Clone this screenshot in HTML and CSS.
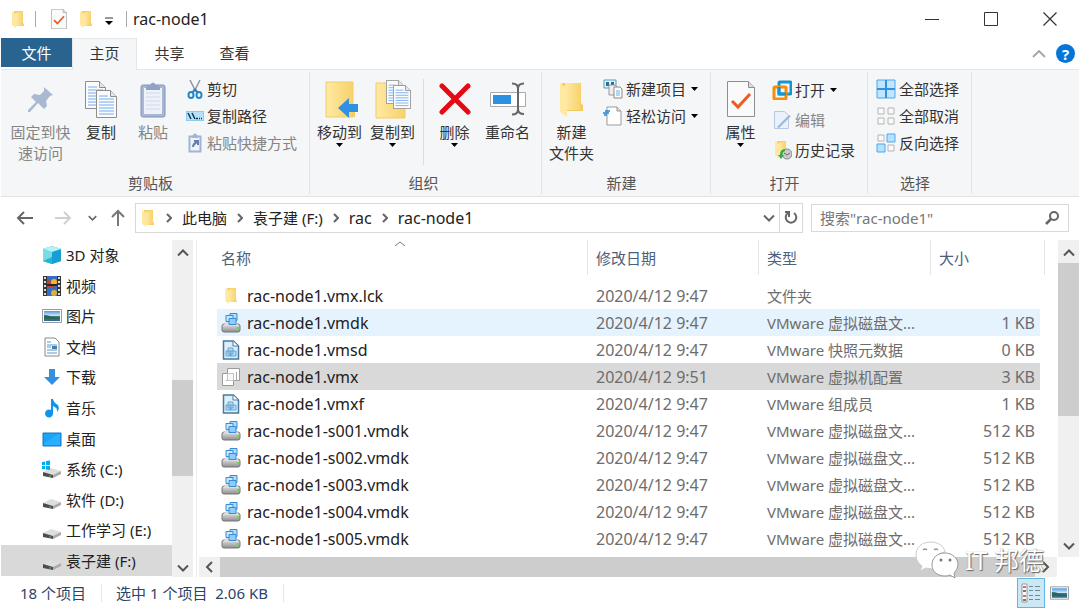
FILE: index.html
```html
<!DOCTYPE html>
<html lang="zh-CN">
<head>
<meta charset="utf-8">
<meta name="viewport" content="width=device-width, initial-scale=1">
<title>rac-node1</title>
<link rel="stylesheet" href="styles.css">
</head>
<body>
<svg class="defs" aria-hidden="true">
  <defs>
    <linearGradient id="gold" x1="0" x2="1"><stop offset="0" stop-color="#ffe9a3"/><stop offset="1" stop-color="#f8d26a"/></linearGradient>
    <linearGradient id="steel" x1="0" x2="0" y1="0" y2="1"><stop offset="0" stop-color="#e4e4e4"/><stop offset="1" stop-color="#8d8d8d"/></linearGradient>
    <linearGradient id="sky" x1="0" x2="0" y1="0" y2="1"><stop offset="0" stop-color="#4f9be0"/><stop offset=".5" stop-color="#d5ecfa"/><stop offset=".55" stop-color="#3c7a70"/><stop offset="1" stop-color="#2d6a9b"/></linearGradient>
    <symbol id="folder" viewBox="0 0 14 18"><path d="M3 1h9v12l1 1v2H3z" fill="#f5cf68"/><path d="M1 1l4 3v14l-4-3z" fill="#ffe8a0"/><path d="M5 3l7-2v14l-7 1z" fill="url(#gold)"/></symbol>
    <symbol id="folder-large" viewBox="0 0 27 36"><path d="M4 2h19v20l2 2v6H4z" fill="#f3ca5e"/><path d="M7 2h16v27H7z" fill="url(#gold)"/><path d="M2 2l7 5v29l-7-5z" fill="#ffe8a0"/></symbol>
    <symbol id="check" viewBox="0 0 28 36"><path d="M.5.5h21l6 6v29H.5z" fill="#fafafa" stroke="#8e8e8e"/><path d="M21.500.5v6h6" fill="#ddd" stroke="#8e8e8e"/><path d="M5 20l6 6 12-13" fill="none" stroke="#f1591d" stroke-width="3"/></symbol>
    <symbol id="page" viewBox="0 0 21 28"><path d="M.5.500h14l6 6v21H.5z" fill="#fbfbfb" stroke="#8e8e8e"/><path d="M14.500.5v6h6" fill="#e6e6e6" stroke="#8e8e8e"/><path d="M3 6h9M3 9h15M3 12h15M3 15h15M3 18h15M3 21h15M3 24h15" stroke="#70aaf5"/></symbol>
    <symbol id="down" viewBox="0 0 7 4"><path d="M0 0h7L3.500 4z" fill="#000"/></symbol>
    <symbol id="chev" viewBox="0 0 12 8"><path d="M1 1.500l5 5 5-5" fill="none" stroke="currentColor" stroke-width="2"/></symbol>
    <symbol id="next" viewBox="0 0 6 10"><path d="M1 1l4 4-4 4" fill="none" stroke="#666" stroke-width="2"/></symbol>
    <symbol id="vmdk" viewBox="0 0 20 20"><rect x="1" y="11" width="18" height="8" rx="2" fill="url(#steel)" stroke="#777"/><path d="M2 13l3-4h10l3 4" fill="#ddd"/><path d="M9 .5h7v7H9z" fill="#a9dcff" stroke="#3b8bd4"/><path d="M5 2.500h7v6H5z" fill="#c7e9ff" stroke="#3b8bd4"/><path d="M8 5.500h7v6H8z" fill="#8ccfff" stroke="#3b8bd4"/><rect x="16" y="14" width="2" height="2" fill="#59e837"/></symbol>
    <symbol id="vmfile" viewBox="0 0 18 20"><path d="M1.500 1h10l5 5v13h-15z" fill="#dceefa" stroke="#48799c" stroke-width="1.500"/><path d="M11 1v5h5" fill="#fff" stroke="#48799c"/><path d="M6 8h5v6H6zM4 11h5v5H4zM8 11h6v5H8z" fill="#b7dbf4" stroke="#64a5d3"/></symbol>
    <symbol id="vmx" viewBox="0 0 20 20"><path d="M6.500 1.500h12v12h-12zM1.500 6.500h11v12h-11z" fill="#fff" stroke="#9a9a9a"/><path d="M5 13.500h10.500V5" fill="none" stroke="#aaa"/><path d="M6.500 6.500h6v7h-6z" fill="#f8f8f8" stroke="#bbb" stroke-dasharray="1 1"/></symbol>
    <symbol id="drive" viewBox="0 0 20 12"><path d="M1 5L9 1l10 3-8 5z" fill="#dedede"/><path d="M1 5l10 3v3L1 9z" fill="#4a4d4a"/><path d="M11 8l8-4v3l-8 4z" fill="#aaa"/><path d="M7 8.500h2v1H7z" fill="#45c75b"/></symbol>
    <symbol id="picture" viewBox="0 0 20 14"><path d="M.5.500h19v13H.5z" fill="#fff" stroke="#9a9a9a"/><path d="M2 2h16v10H2z" fill="url(#sky)"/><path d="M2 6q5 0 8 2l8 1v1H2z" fill="#2c635c"/></symbol>
  </defs>
</svg>

<header class="titlebar">
  <svg class="i14"><use href="#folder"/></svg>
  <span class="rule"></span>
  <button class="quick" aria-label="属性"><svg class="i-check"><use href="#check"/></svg></button>
  <button class="quick" aria-label="新建文件夹"><svg class="i14"><use href="#folder"/></svg></button>
  <button class="quick more" aria-label="自定义快速访问工具栏"><svg width="8" height="8" viewBox="0 0 8 8"><path d="M0 1h8" stroke="#333"/><path d="M0 4h8L4 8z"/></svg></button>
  <span class="rule"></span>
  <h1>rac-node1</h1>
  <div class="window-buttons">
    <button aria-label="最小化"><svg width="14" height="14"><path d="M0 7.500h14" stroke="#333"/></svg></button>
    <button aria-label="最大化"><svg width="14" height="14"><path d="M.5.500h13v13H.5z" fill="none" stroke="#333"/></svg></button>
    <button aria-label="关闭"><svg width="14" height="14"><path d="M.5.500l13 13M13.500.500l-13 13" stroke="#333" stroke-width="1.200"/></svg></button>
  </div>
</header>

<nav class="tabs">
  <button class="tab file">文件</button>
  <button class="tab active">主页</button>
  <button class="tab">共享</button>
  <button class="tab">查看</button>
  <div class="tab-tools">
    <button aria-label="折叠功能区"><svg width="14" height="8"><path d="M1 7l6-6 6 6" fill="none" stroke="#a5a5a5" stroke-width="1.800"/></svg></button>
    <button class="help" aria-label="帮助">?</button>
  </div>
</nav>

<section class="ribbon">
  <div class="group">
    <div class="tools">
      <button class="big pin" disabled><span class="art"><svg width="27" height="27" viewBox="0 0 27 27"><path d="M17 1l9 8-3 1-4 5 1 5-3 3-6-6-8 9H1v-2l8-8-5-5 3-3 6 1 4-4z" fill="#a9b9d1"/></svg></span>固定到快速访问</button>
      <button class="big copy"><span class="art"><svg width="32" height="37" viewBox="0 0 32 37"><use href="#page" width="21" height="28"/><use href="#page" x="11" y="9" width="21" height="28"/></svg></span>复制</button>
      <button class="big paste" disabled><span class="art"><svg width="26" height="37" viewBox="0 0 26 37"><rect x="1" y="4" width="24" height="32" rx="2" fill="#a9b7d2" stroke="#7f94bd"/><path d="M4 7h18v26H4z" fill="#edf2f9"/><path d="M6 12h14M6 16h14M6 20h14M6 24h14M6 28h14" stroke="#cfd9ea"/><path d="M6 6l4-2q3-5 6 0l4 2v3H6z" fill="#91a2c4"/></svg></span>粘贴</button>
      <div class="stack">
        <button class="small"><svg class="i18" viewBox="0 0 18 20"><path d="M4 1l6 12M14 1L8 13" stroke="#8d969e" stroke-width="1.500"/><path d="M9 10l-3 4M9 10l3 4" stroke="#2487cc" stroke-width="2"/><ellipse cx="5" cy="16" rx="2.500" ry="3" fill="none" stroke="#2487cc" stroke-width="2"/><ellipse cx="13" cy="16" rx="2.500" ry="3" fill="none" stroke="#2487cc" stroke-width="2"/></svg>剪切</button>
        <button class="small"><svg class="i18" viewBox="0 0 18 18"><path d="M0 4h18v10H0z" fill="#8dcbf2"/><path d="M1 5h16v8H1z" fill="#b7e1fb"/><path d="M2 6l3 6M6 6l3 6M10 11.500h2M13 11.500h1M15 11.500h1" stroke="#1b3449" stroke-width="1.500"/></svg>复制路径</button>
        <button class="small" disabled><svg class="i18" viewBox="0 0 18 20"><path d="M3.500 3.500h11v15h-11z" fill="#eef3fa" stroke="#a3b3d1" stroke-width="2"/><path d="M6 3l3-3 3 3v2H6z" fill="#a3b3d1"/><path d="M7 14q0-3 4-5M8 8h4v4" fill="none" stroke="#647ead" stroke-width="2"/></svg>粘贴快捷方式</button>
      </div>
    </div>
    <h2>剪贴板</h2>
  </div>

  <div class="group organize">
    <div class="tools">
      <button class="big"><span class="art"><svg width="36" height="37" viewBox="0 0 36 37"><path d="M4 1h27v22l2 2v11H4z" fill="#f6cc5c"/><path d="M4 1h27v35H4z" fill="url(#gold)" stroke="#f1cc6b"/><path d="M16 27l11-10v6h10v8H27v6z" fill="#2e91e5"/></svg></span>移动到<svg class="caret"><use href="#down"/></svg></button>
      <button class="big"><span class="art"><svg width="36" height="39" viewBox="0 0 36 39"><path d="M1 3h26v20l3 3v12H1z" fill="url(#gold)" stroke="#f1cc6b"/><use href="#page" x="11" y="0" width="18" height="24"/><use href="#page" x="18" y="5" width="18" height="24"/></svg></span>复制到<svg class="caret"><use href="#down"/></svg></button>
      <span class="divider"></span>
      <button class="big"><span class="art"><svg width="32" height="32" viewBox="0 0 32 32"><path d="M3 3l26 26M29 3L3 29" stroke="#e50914" stroke-width="5" stroke-linecap="round"/></svg></span>删除<svg class="caret"><use href="#down"/></svg></button>
      <button class="big"><span class="art"><svg width="36" height="34" viewBox="0 0 36 34"><path d="M.5 10.500h35v14H.5z" fill="#fff" stroke="#aaa"/><path d="M3 13h18v9H3z" fill="#2b91e5"/><path d="M22 1.500q6 0 6 5v21q0 5-6 5M34 1.500q-6 0-6 5M28 27q0 5 6 5" fill="none" stroke="#666" stroke-width="2"/></svg></span>重命名</button>
    </div>
    <h2>组织</h2>
  </div>

  <div class="group">
    <div class="tools">
      <button class="big"><span class="art"><svg width="27" height="36"><use href="#folder-large"/></svg></span>新建<br>文件夹</button>
      <div class="stack">
        <button class="small"><svg class="i20" viewBox="0 0 20 20"><path d="M1 1h12v8H1z" fill="#dff4fc" stroke="#5a9bb6"/><path d="M3 3h3v4H3zM8 3h3v3H8z" fill="#286d9a"/><path d="M6 6h6l2 2v8H6z" fill="#eee" stroke="#999"/><path d="M11 8h6l2 2v9h-8z" fill="#fff" stroke="#888"/><path d="M13 12h4M13 14h4M13 16h4" stroke="#6ab0e4"/></svg>新建项目<svg class="caret"><use href="#down"/></svg></button>
        <button class="small"><svg class="i20" viewBox="0 0 20 20"><path d="M4 1h10l4 4v14H4z" fill="#fff" stroke="#999"/><path d="M14 1v4h4" fill="#ddd" stroke="#999"/><path d="M2 5h5M0 7h6M1 9h3" stroke="#2385cb" stroke-width="1.500"/></svg>轻松访问<svg class="caret"><use href="#down"/></svg></button>
      </div>
    </div>
    <h2>新建</h2>
  </div>

  <div class="group">
    <div class="tools">
      <button class="big"><span class="art"><svg width="28" height="36"><use href="#check"/></svg></span>属性<svg class="caret"><use href="#down"/></svg></button>
      <div class="stack roomy">
        <button class="small"><svg class="i20" viewBox="0 0 20 20"><rect x="7" y="2" width="12" height="12" rx="1" fill="none" stroke="#1596d1" stroke-width="3"/><rect x="2" y="7" width="12" height="12" rx="1" fill="none" stroke="#f78d0a" stroke-width="3"/><path d="M7 7v7h7" fill="none" stroke="#1596d1" stroke-width="3"/></svg>打开<svg class="caret"><use href="#down"/></svg></button>
        <button class="small" disabled><svg class="i20" viewBox="0 0 20 20"><path d="M2.500 1.500h10l4 4v13h-14z" fill="#e8f1fc" stroke="#b9c9e1"/><path d="M5 17L17 5l2 1L7 18z" fill="#9fb5d7"/></svg>编辑</button>
        <button class="small"><svg class="i20" viewBox="0 0 20 20"><use href="#folder" x="2" y="0" width="14" height="18"/><circle cx="15" cy="14" r="5" fill="#ccc" stroke="#888"/><path d="M12 13l3 2 3-2" fill="none" stroke="#666"/><path d="M13 9q-5 0-5 6H6l3 4 3-4h-2q0-3 3-4z" fill="#2bae43"/></svg>历史记录</button>
      </div>
    </div>
    <h2>打开</h2>
  </div>

  <div class="group">
    <div class="tools">
      <div class="stack">
        <button class="small"><svg class="i20" viewBox="0 0 20 20"><path d="M1 1h18v18H1z" fill="#c1e4ff" stroke="#4ba8ee"/><path d="M10 1v18M1 10h18" stroke="#2e92df" stroke-width="2"/></svg>全部选择</button>
        <button class="small"><svg class="i20" viewBox="0 0 20 20"><path d="M2 2h6v6H2zM12 2h6v6h-6zM2 12h6v6H2zM12 12h6v6h-6z" fill="#fafafa" stroke="#b4b4b4"/></svg>全部取消</button>
        <button class="small"><svg class="i20" viewBox="0 0 20 20"><path d="M2 2h6v6H2zM12 12h6v6h-6z" fill="#fafafa" stroke="#b4b4b4"/><path d="M11 1h8v8h-8zM1 11h8v8H1z" fill="#b8e0ff" stroke="#4ba8ee"/></svg>反向选择</button>
      </div>
    </div>
    <h2>选择</h2>
  </div>
</section>

<section class="location">
  <button class="back" aria-label="返回"><svg width="17" height="14"><path d="M17 7H2M8 1L2 7l6 6" fill="none" stroke="#666" stroke-width="2"/></svg></button>
  <button class="forward" aria-label="前进"><svg width="17" height="14"><path d="M0 7h15M9 1l6 6-6 6" fill="none" stroke="#d0d0d0" stroke-width="2"/></svg></button>
  <button class="recent" aria-label="最近浏览的位置"><svg width="9" height="6"><use href="#chev"/></svg></button>
  <button class="up" aria-label="上移"><svg width="14" height="17"><path d="M7 17V2M1 8l6-6 6 6" fill="none" stroke="#777" stroke-width="2"/></svg></button>
  <div class="address">
    <svg class="i14"><use href="#folder"/></svg>
    <svg class="sep"><use href="#next"/></svg><a href="#pc">此电脑</a>
    <svg class="sep"><use href="#next"/></svg><a href="#f">袁子建 (F:)</a>
    <svg class="sep"><use href="#next"/></svg><a class="latin" href="#rac">rac</a>
    <svg class="sep"><use href="#next"/></svg><a class="latin" href="#node">rac-node1</a>
    <button class="history" aria-label="以前的位置"><svg width="12" height="8"><use href="#chev"/></svg></button>
    <button class="refresh" aria-label="刷新"><svg width="14" height="15" viewBox="0 0 14 15"><path d="M4 3a5.300 5.300 0 1 0 6 0" fill="none" stroke="#666" stroke-width="2"/><path d="M1 2h4v5" fill="none" stroke="#666" stroke-width="2"/></svg></button>
  </div>
  <label class="search">
    <input type="text" aria-label="搜索" placeholder='搜索"rac-node1"'>
    <svg width="14" height="14"><circle cx="9" cy="5" r="4" fill="none" stroke="#666" stroke-width="2"/><path d="M6 8l-5 5" stroke="#666" stroke-width="2.500"/></svg>
  </label>
</section>

<main class="explorer">
  <nav class="tree">
    <a href="#3d"><svg viewBox="0 0 20 20"><path d="M10 1l9 3v12l-9 3-9-3V4z" fill="#16b6d8"/><path d="M1 4l9 3v12l-9-3z" fill="#79dbe8"/><path d="M10 7l9-3v12l-9 3z" fill="#159fd4"/><path d="M10 1l9 3-9 3-9-3z" fill="#b7f1f3"/><path d="M1 16l9-4v7z" fill="#24b5cf"/></svg>3D 对象</a>
    <a href="#video"><svg viewBox="0 0 20 20"><path d="M1 0h18v20H1z" fill="#353535"/><path d="M5 0h10v20H5z" fill="#326fc5"/><path d="M5 3l5 3 5-3v5l-3 3H5z" fill="#c74130"/><circle cx="12" cy="6" r="3" fill="#f2b52f"/><circle cx="12" cy="17" r="3" fill="#e2af36"/><path d="M5 9h10" stroke="#1e2a25" stroke-width="2"/><path d="M3 1v19M17 1v19" stroke="#ddd" stroke-width="2" stroke-dasharray="2 2"/></svg>视频</a>
    <a href="#pics"><svg><use href="#picture"/></svg>图片</a>
    <a href="#docs"><svg viewBox="0 0 20 20"><path d="M3 1h10l4 4v14H3z" fill="#fff" stroke="#888"/><path d="M5 5h4M5 8h10M5 10h4M5 13h10M5 16h10" stroke="#5298d1"/><path d="M10 9h5v3h-5z" fill="#467faa"/></svg>文档</a>
    <a href="#downloads"><svg viewBox="0 0 20 20"><path d="M7 2h6v8h5l-8 8-8-8h5z" fill="#3290df"/></svg>下载</a>
    <a href="#music"><svg viewBox="0 0 20 20"><path d="M9 1h2q1 4 5 6 2 4-1 7 1-4-4-6v7a4 4 0 1 1-2-3z" fill="#1094eb"/></svg>音乐</a>
    <a href="#desktop"><svg viewBox="0 0 20 20"><path d="M1 4h18v13H1z" fill="#1aa5fb" stroke="#1474bd"/><path d="M2 15L16 5h2v11H2z" fill="#2caeff"/></svg>桌面</a>
    <a href="#c"><svg viewBox="0 0 20 20"><use href="#drive" y="8" width="20" height="12"/><path d="M0 3l3-.500V6H0zM4 2l4-.500V6H4zM0 7h3v3H0zM4 7h4v4l-4-.500z" fill="#00adef"/></svg>系统 (C:)</a>
    <a href="#d"><svg viewBox="0 0 20 20"><use href="#drive" y="8" width="20" height="12"/></svg>软件 (D:)</a>
    <a href="#e"><svg viewBox="0 0 20 20"><use href="#drive" y="8" width="20" height="12"/></svg>工作学习 (E:)</a>
    <a class="selected" href="#f"><svg viewBox="0 0 20 20"><use href="#drive" y="8" width="20" height="12"/></svg>袁子建 (F:)</a>
  </nav>
  <div class="scroll vertical tree-scroll" aria-hidden="true">
    <svg class="turn" width="12" height="8"><use href="#chev"/></svg><span class="gap-a"></span><span class="thumb"></span><span class="gap-b"></span><svg width="12" height="8"><use href="#chev"/></svg>
  </div>
  <section class="content">
    <div class="listing">
      <div class="table-wrap">
        <svg class="sort" width="10" height="5"><path d="M0 5l5-4 5 4" fill="none" stroke="#777"/></svg>
        <table>
          <thead><tr><th class="name">名称</th><th class="date">修改日期</th><th class="type">类型</th><th class="size">大小</th></tr></thead>
          <tbody>
            <tr><td><span><svg class="i14"><use href="#folder"/></svg>rac-node1.vmx.lck</span></td><td>2020/4/12 9:47</td><td>文件夹</td><td></td></tr>
            <tr class="hover"><td><span><svg><use href="#vmdk"/></svg>rac-node1.vmdk</span></td><td>2020/4/12 9:47</td><td>VMware 虚拟磁盘文...</td><td>1 KB</td></tr>
            <tr><td><span><svg><use href="#vmfile"/></svg>rac-node1.vmsd</span></td><td>2020/4/12 9:47</td><td>VMware 快照元数据</td><td>0 KB</td></tr>
            <tr class="selected"><td><span><svg><use href="#vmx"/></svg>rac-node1.vmx</span></td><td>2020/4/12 9:51</td><td>VMware 虚拟机配置</td><td>3 KB</td></tr>
            <tr><td><span><svg><use href="#vmfile"/></svg>rac-node1.vmxf</span></td><td>2020/4/12 9:47</td><td>VMware 组成员</td><td>1 KB</td></tr>
            <tr><td><span><svg><use href="#vmdk"/></svg>rac-node1-s001.vmdk</span></td><td>2020/4/12 9:47</td><td>VMware 虚拟磁盘文...</td><td>512 KB</td></tr>
            <tr><td><span><svg><use href="#vmdk"/></svg>rac-node1-s002.vmdk</span></td><td>2020/4/12 9:47</td><td>VMware 虚拟磁盘文...</td><td>512 KB</td></tr>
            <tr><td><span><svg><use href="#vmdk"/></svg>rac-node1-s003.vmdk</span></td><td>2020/4/12 9:47</td><td>VMware 虚拟磁盘文...</td><td>512 KB</td></tr>
            <tr><td><span><svg><use href="#vmdk"/></svg>rac-node1-s004.vmdk</span></td><td>2020/4/12 9:47</td><td>VMware 虚拟磁盘文...</td><td>512 KB</td></tr>
            <tr><td><span><svg><use href="#vmdk"/></svg>rac-node1-s005.vmdk</span></td><td>2020/4/12 9:47</td><td>VMware 虚拟磁盘文...</td><td>512 KB</td></tr>
          </tbody>
        </table>
      </div>
      <div class="scroll vertical list-scroll" aria-hidden="true">
        <svg class="turn" width="12" height="8"><use href="#chev"/></svg><span class="thumb"></span><span class="gap"></span><svg width="12" height="8"><use href="#chev"/></svg>
      </div>
    </div>
    <div class="scroll horizontal" aria-hidden="true">
      <svg width="8" height="12"><path d="M7 1L2 6l5 5" fill="none" stroke="#555" stroke-width="2"/></svg><span class="thumb"></span><svg width="8" height="12"><path d="M1 1l5 5-5 5" fill="none" stroke="#555" stroke-width="2"/></svg>
    </div>
  </section>
</main>

<footer class="status">
  <span>18 个项目</span><span>选中 1 个项目&nbsp; 2.06 KB</span>
  <div class="views">
    <button class="on" aria-label="详细信息"><svg width="20" height="20"><path d="M1 1h5v18H1z" fill="#fff" stroke="#999"/><path d="M2 4h3M2 13h3" stroke="#e26a5a" stroke-width="2"/><path d="M2 8h3M2 17h3" stroke="#777" stroke-width="2"/><path d="M8 3.500h4M14 3.500h5M8 7.500h4M14 7.500h5M8 12.500h4M14 12.500h5M8 16.500h4M14 16.500h5" stroke="#6d8793"/></svg></button>
    <button aria-label="大缩略图"><svg width="19" height="14"><use href="#picture"/></svg></button>
  </div>
</footer>

<div class="watermark">
  <svg width="44" height="38" viewBox="0 0 44 38"><path d="M16 1C7 1 1 6 1 14q0 7 6 11l-2 5 6-3 6 1h3q-4-15 10-17C29 5 23 1 16 1z" fill="#fff" stroke="#ccc"/><path d="M30 12c-8 0-13 5-13 12s6 11 13 11q3 0 5-1l5 3-1-5q4-4 4-8c0-7-6-12-13-12z" fill="#fff" stroke="#999"/><path d="M8 9q2-2 4 0M19 9q2-2 4 0" fill="none" stroke="#999" stroke-width="1.500"/><circle cx="26" cy="19" r="1.500" fill="#777"/><circle cx="35" cy="19" r="1.500" fill="#777"/></svg>
  <span>IT 邦德</span>
</div>
</body>
</html>
```
FILE: styles.css
```css
* { box-sizing: border-box; }
body {
  margin: 0;
  padding: 0 1px;
  min-height: 100vh;
  position: relative;
  display: flex;
  flex-direction: column;
  background: #fff;
  color: #222;
  font: 15px/20px "Noto Sans", "Noto Sans CJK SC", sans-serif;
}
button, input { font: inherit; color: inherit; }
button { border: 0; padding: 0; background: none; display: flex; align-items: center; justify-content: center; white-space: nowrap; }
a { color: inherit; text-decoration: none; }
svg { display: block; flex: none; }
h1, h2 { margin: 0; font-weight: 400; }
.defs { position: absolute; width: 0; height: 0; }
.i14 { width: 14px; height: 18px; }
.i18 { width: 18px; height: 20px; }
.i20 { width: 20px; height: 20px; }
.i-check { width: 16px; height: 20px; }

.titlebar { height: 38px; display: flex; align-items: center; padding-left: 10px; }
.titlebar .rule { width: 1px; height: 16px; background: #aaa; margin: 0 15px 0 10px; }
.titlebar h1 { font-size: 16px; }
.quick { margin-right: 12px; }
.quick.more { margin: 4px 0 0; }
.more + .rule { margin: 0 6px 0 13px; }
.window-buttons { margin-left: auto; display: flex; }
.window-buttons button { width: 59px; height: 38px; }

.tabs { height: 32px; display: flex; border-bottom: 1px solid #e4e6e8; color: #333; }
.tab { width: 65px; height: 29px; }
.tab.file { width: 71px; background: #29638f; color: #fff; }
.tab.active { height: 32px; padding-bottom: 3px; background: #f5f6f7; border: 1px solid #e4e6e8; border-bottom: 0; }
.tab-tools { margin-left: auto; display: flex; align-items: center; gap: 10px; padding-right: 4px; }
.help { width: 19px; height: 19px; border-radius: 50%; background: #0575d8; color: #fff; font-weight: 700; }

.ribbon { display: flex; height: 127px; padding: 2px 0; background: #f5f6f7; border-bottom: 1px solid #e1e3e5; color: #333; }
.group { display: flex; flex-direction: column; justify-content: space-between; padding: 3px 12px 1px 3px; border-right: 1px solid #e1e3e5; }
.group.organize { padding-right: 7px; }
.group h2 { font-size: 15px; text-align: center; color: #555; }
.tools { display: flex; }
.big { width: 53px; flex-direction: column; justify-content: flex-start; padding-top: 5px; line-height: 21px; }
.big.pin { width: 73px; padding-left: 6px; padding-right: 6px; white-space: normal; }
.big.copy { width: 48px; }
.big.paste { width: 56px; }
.art { height: 38px; margin-bottom: 4px; display: flex; align-items: center; }
.caret { width: 7px; height: 4px; }
.small .caret { margin-left: 2px; }
.stack { padding-left: 5px; }
.small { height: 27px; gap: 3px; }
.roomy .small { height: 30px; }
button:disabled { color: #858585; }
.divider { width: 1px; height: 86px; background: #dcdddf; margin: 4px 4px 0; }

.location { height: 43px; display: flex; align-items: center; padding: 0 10px 2px 15px; color: #222; }
.forward { margin-left: 22px; }
.recent { margin-left: 16px; color: #666; }
.up { margin: 0 10px 0 14px; }
.address { flex: 1; height: 30px; display: flex; align-items: center; border: 1px solid #d9d9d9; padding-left: 5px; white-space: nowrap; }
.address a { margin: 0 10px; }
.address .latin { font-size: 16px; }
.sep { width: 6px; height: 10px; }
.i14 + .sep { margin-left: 11px; }
.history { margin-left: auto; width: 20px; height: 28px; color: #666; }
.refresh { width: 23px; height: 28px; border-left: 1px solid #d9d9d9; }
.search { flex: 0 0 258px; height: 28px; margin-left: 8px; padding: 0 9px 0 8px; display: flex; align-items: center; border: 1px solid #d9d9d9; }
.search input { min-width: 0; flex: 1; border: 0; outline: 0; padding: 0; background: none; }
.search input::placeholder { color: #777; opacity: 1; }

.explorer { flex: 1; display: flex; min-height: 337px; }
.tree { width: 171px; display: flex; flex-direction: column; padding-bottom: 1px; }
.tree a { flex: 1; display: flex; align-items: center; gap: 4px; padding-left: 41px; white-space: nowrap; }
.tree svg { width: 20px; height: 20px; }
.tree .selected { background: #d9d9d9; }
.scroll { display: flex; align-items: center; background: #f0f0f0; color: #555; }
.vertical { width: 21px; flex-direction: column; padding: 9px 0 5px; }
.turn { transform: rotate(180deg); }
.scroll .thumb { background: #cdcdcd; }
.vertical .thumb { width: 21px; }
.tree-scroll .gap-a { flex: 123; }
.tree-scroll .thumb { flex: 96; }
.tree-scroll .gap-b { flex: 88; }
.list-scroll { padding-bottom: 7px; }
.list-scroll .thumb { flex: 153; margin-top: 6px; }
.list-scroll .gap { flex: 126; }
.content { flex: 1; min-width: 0; margin-left: 3px; padding-left: 2px; border-left: 1px solid #ececec; display: flex; flex-direction: column; }
.listing { flex: 1; display: flex; }
.table-wrap { flex: 1; position: relative; padding: 0 18px 0 18px; }
.sort { position: absolute; top: 1px; left: 196px; }
table { width: 100%; border-collapse: collapse; table-layout: fixed; }
th { height: 42px; padding: 0 0 6px 8px; text-align: left; font-weight: 400; color: #4c607a; position: relative; }
th::after { content: ""; position: absolute; right: 0; top: 0; width: 1px; height: 35px; background: #e5e5e5; }
th.name { padding-left: 4px; }
th.date { width: 171px; }
th.type { width: 172px; }
th.size { width: 109px; }
th.size::after { right: -5px; }
td { height: 27px; padding: 0 0 0 8px; color: #6d6d6d; white-space: nowrap; font-size: 16px; }
td:first-child { padding-left: 4px; color: #222; }
td:nth-child(3) { font-size: 15px; }
td:last-child { padding: 0 5px 0 0; text-align: right; }
td span { display: flex; align-items: center; gap: 6px; }
td svg { width: 20px; height: 20px; }
td .i14 { width: 20px; height: 17px; }
tr.hover { background: #e5f3ff; }
tr.selected { background: #d9d9d9; }
.horizontal { height: 20px; gap: 7px; padding: 0 7px 0 6px; margin-right: 22px; }
.horizontal .thumb { flex: 1; height: 20px; }

.status { height: 32px; display: flex; align-items: center; padding: 0 10px 0 19px; color: #2b4568; }
.status span { padding-right: 15px; margin-right: 14px; border-right: 1px solid #e6e6e6; line-height: 18px; }
.views { margin-left: auto; display: flex; align-items: center; gap: 5px; }
.views .on { width: 28px; height: 30px; border: 1px solid #60b7df; background: #cce8f6; }

.watermark { position: absolute; right: 36px; bottom: 30px; display: flex; align-items: center; gap: 6px; font-size: 25px; line-height: 36px; color: #fff; text-shadow: 1px 1px 1px #666, 0 0 1px #888; pointer-events: none; white-space: nowrap; }
```
